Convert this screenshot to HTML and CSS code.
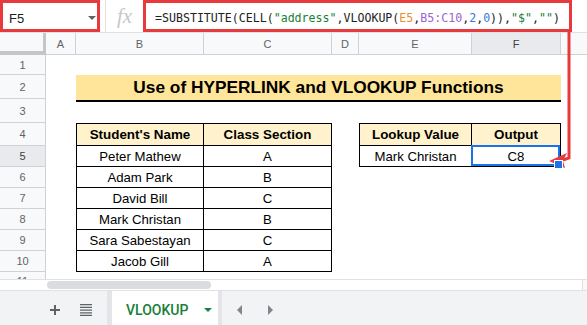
FILE: index.html
```html
<!DOCTYPE html>
<html lang="en">
<head>
    <meta charset="UTF-8">
    <meta name="viewport" content="width=device-width, initial-scale=1.0">
    <title>VLOOKUP - Google Sheets</title>
    <link rel="stylesheet" href="styles.css">
</head>
<body>
    <div class="topbar">
        <div class="namebox">
            <span class="cellref">F5</span>
            <span class="caret"></span>
        </div>
        <div class="divider"></div>
        <div class="fx">fx</div>
        <div class="formula">=SUBSTITUTE(CELL(<span class="tok-str">"address"</span>,VLOOKUP(<span class="tok-ref1">E5</span>,<span class="tok-ref2">B5:C10</span>,<span class="tok-num">2</span>,<span class="tok-num">0</span>)),<span class="tok-str">"$"</span>,<span class="tok-str">""</span>)</div>
    </div>

    <div class="colheads">
        <div class="corner"></div>
        <div class="ch col-a">A</div>
        <div class="ch col-b">B</div>
        <div class="ch col-c">C</div>
        <div class="ch col-d">D</div>
        <div class="ch col-e">E</div>
        <div class="ch col-f active">F</div>
        <div class="ch col-g"></div>
    </div>

    <div class="sheet">
        <div class="row h20"><div class="rh">1</div></div>

        <div class="row h24">
            <div class="rh">2</div>
            <div class="gap col-a"></div>
            <div class="title">Use of HYPERLINK and VLOOKUP Functions</div>
        </div>

        <div class="row h24"><div class="rh">3</div></div>

        <div class="row h23">
            <div class="rh">4</div>
            <div class="gap col-a"></div>
            <div class="cell head first col-b">Student's Name</div>
            <div class="cell head col-c">Class Section</div>
            <div class="gap col-d"></div>
            <div class="cell head first col-e">Lookup Value</div>
            <div class="cell head col-f">Output</div>
        </div>

        <div class="row h21">
            <div class="rh active">5</div>
            <div class="gap col-a"></div>
            <div class="cell first col-b">Peter Mathew</div>
            <div class="cell col-c">A</div>
            <div class="gap col-d"></div>
            <div class="cell first col-e">Mark Christan</div>
            <div class="cell col-f selected">C8</div>
        </div>

        <div class="row h21">
            <div class="rh">6</div>
            <div class="gap col-a"></div>
            <div class="cell first col-b">Adam Park</div>
            <div class="cell col-c">B</div>
        </div>

        <div class="row h21">
            <div class="rh">7</div>
            <div class="gap col-a"></div>
            <div class="cell first col-b">David Bill</div>
            <div class="cell col-c">C</div>
        </div>

        <div class="row h21">
            <div class="rh">8</div>
            <div class="gap col-a"></div>
            <div class="cell first col-b">Mark Christan</div>
            <div class="cell col-c">B</div>
        </div>

        <div class="row h21">
            <div class="rh">9</div>
            <div class="gap col-a"></div>
            <div class="cell first col-b">Sara Sabestayan</div>
            <div class="cell col-c">C</div>
        </div>

        <div class="row h21">
            <div class="rh">10</div>
            <div class="gap col-a"></div>
            <div class="cell first col-b">Jacob Gill</div>
            <div class="cell col-c">A</div>
        </div>

        <div class="row h21"><div class="rh partial">11</div></div>
    </div>

    <div class="hscroll">
        <div class="track"><div class="thumb"></div></div>
        <div class="vcorner"></div>
    </div>

    <div class="sheetbar">
        <svg class="icon-plus" width="10" height="10" viewBox="0 0 10 10">
            <path d="M5 0v10M0 5h10" stroke="#5f6368" stroke-width="2"/>
        </svg>
        <svg class="icon-list" width="12" height="12" viewBox="0 0 12 12">
            <path d="M0 0.7h12M0 3.4h12M0 6.1h12M0 8.8h12M0 11.4h12" stroke="#5f6368" stroke-width="1.3"/>
        </svg>
        <div class="tab">
            <span class="tab-name">VLOOKUP</span>
            <span class="tab-caret"></span>
        </div>
        <span class="nav nav-prev"></span>
        <span class="nav nav-next"></span>
    </div>

    <!-- annotation arrow from the formula box down to F5 -->
    <svg class="annot" width="587" height="325" viewBox="0 0 587 325">
        <path d="M569 30V158L563 160" fill="none" stroke="#e8393d" stroke-width="3"/>
        <polygon points="549,161 567,153 563,161 565,168" fill="#e8393d"/>
    </svg>
</body>
</html>
```

FILE: styles.css
```css
* {
    box-sizing: border-box;
}

body {
    position: relative;
    width: 587px;
    height: 325px;
    margin: 0;
    overflow: hidden;
    background-color: #ffffff;
    font-family: 'Liberation Sans', Arial, sans-serif;
    color: #000000;
}

/* formula bar */

.topbar {
    display: flex;
    height: 32px;
}

.namebox {
    display: flex;
    align-items: center;
    width: 100px;
    height: 32px;
    padding: 4px 1px 0 6px;
    border: 3px solid #e8393d;
}

.cellref {
    font-size: 13px;
    color: #202124;
}

.caret {
    margin-left: auto;
    border-left: 4px solid transparent;
    border-right: 4px solid transparent;
    border-top: 4px solid #5f6368;
}

.divider {
    width: 1px;
    margin-left: 5px;
    background-color: #e3e3e3;
}

.fx {
    display: flex;
    align-items: center;
    justify-content: center;
    width: 37px;
    padding-top: 1px;
    font-family: 'Liberation Serif', serif;
    font-style: italic;
    font-size: 21px;
    color: #c4c7cb;
}

.formula {
    display: flex;
    align-items: center;
    width: 429px;
    height: 32px;
    padding: 3px 0 0 9px;
    border: 3px solid #e8393d;
    font-family: 'DejaVu Sans Mono', monospace;
    font-size: 11.6px;
    color: #202124;
    white-space: pre;
}

.tok-str { color: #188038; }
.tok-ref1 { color: #e8912d; }
.tok-ref2 { color: #9a62d3; }
.tok-num { color: #3b78d8; }

/* column widths shared by headers and rows */

.col-a { width: 30px; }
.col-b { width: 128px; }
.col-c { width: 128px; }
.col-d { width: 27px; }
.col-e { width: 113px; }
.col-f { width: 89px; }
.col-g { flex: 1; }

/* column headers */

.colheads {
    display: flex;
    height: 23px;
    border-top: 1px solid #e1e1e1;
    background-color: #f8f9fa;
}

.corner {
    width: 46px;
    border-right: 3px solid #c4c6c9;
    border-bottom: 4px solid #c4c6c9;
}

.ch {
    display: flex;
    align-items: center;
    justify-content: center;
    border-right: 1px solid #cfd1d4;
    border-bottom: 1px solid #cfd1d4;
    font-size: 11px;
    color: #5f6368;
}

.ch.col-g {
    border-right: none;
}

.ch.active {
    background-color: #e8eaed;
    color: #3c4043;
}

/* grid body */

.sheet {
    height: 224px;
    overflow: hidden;
}

.row {
    display: flex;
}

.h20 { height: 20px; }
.h21 { height: 21px; }
.h23 { height: 23px; }
.h24 { height: 24px; }

.rh {
    display: flex;
    align-items: center;
    justify-content: center;
    flex-shrink: 0;
    width: 46px;
    border-right: 1px solid #cfd1d4;
    border-bottom: 1px solid #cfd1d4;
    background-color: #f8f9fa;
    font-size: 11px;
    color: #5f6368;
}

.rh.partial {
    align-items: flex-start;
    padding-top: 3px;
}

.rh.active {
    background-color: #e8eaed;
    color: #3c4043;
}

.gap {
    flex-shrink: 0;
}

.title {
    flex-shrink: 0;
    display: flex;
    align-items: center;
    justify-content: center;
    width: 485px;
    height: 27px;
    border-bottom: 2px solid #000000;
    background-color: #ffe599;
    font-size: 17.3px;
    font-weight: bold;
}

.cell {
    position: relative;
    flex-shrink: 0;
    display: flex;
    align-items: center;
    justify-content: center;
    border-right: 1px solid #000000;
    border-bottom: 1px solid #000000;
    font-size: 13.2px;
}

.cell.first {
    border-left: 1px solid #000000;
}

.cell.head {
    border-top: 1px solid #000000;
    background-color: #fff2cc;
    font-size: 13.4px;
    font-weight: bold;
}

.cell.selected::after {
    content: '';
    position: absolute;
    top: -1px;
    left: -1px;
    right: 0;
    bottom: 0;
    border: 2px solid #1a73e8;
}

.cell.selected::before {
    content: '';
    position: absolute;
    right: -3px;
    bottom: -3px;
    width: 7px;
    height: 7px;
    border: 1px solid #ffffff;
    background-color: #1a73e8;
    z-index: 1;
}

/* horizontal scrollbar */

.hscroll {
    display: flex;
    height: 12px;
    border-top: 1px solid #e1e1e1;
    border-bottom: 1px solid #e1e1e1;
}

.track {
    flex: 1;
    padding: 1px 0 0 47px;
}

.thumb {
    width: 164px;
    height: 8px;
    border-radius: 4px;
    background-color: #dadce0;
}

.vcorner {
    width: 5px;
    border-left: 1px solid #e1e1e1;
    background-color: #f8f9fa;
}

/* sheet tabs */

.sheetbar {
    display: flex;
    align-items: center;
    height: 34px;
    background-color: #f1f3f4;
}

.icon-plus {
    margin: 3px 0 0 50px;
}

.icon-list {
    margin: 3px 0 0 20px;
}

.tab {
    display: flex;
    align-items: center;
    align-self: stretch;
    margin-left: 15px;
    padding: 3px 6px 0 14px;
    border-left: 5px solid #e3e5e8;
    border-right: 4px solid #e3e5e8;
    background-color: #ffffff;
}

.tab-name {
    width: 68px;
    font-family: Roboto, 'Liberation Sans', sans-serif;
    font-size: 14px;
    font-weight: 500;
    color: #188038;
}

.tab-caret {
    margin-left: 10px;
    border-left: 4px solid transparent;
    border-right: 4px solid transparent;
    border-top: 4px solid #188038;
}

.nav {
    margin-top: 3px;
    border-top: 5px solid transparent;
    border-bottom: 5px solid transparent;
}

.nav-prev {
    margin-left: 15px;
    border-right: 5px solid #80868b;
}

.nav-next {
    margin-left: 26px;
    border-left: 5px solid #80868b;
}

.annot {
    position: absolute;
    top: 0;
    left: 0;
    pointer-events: none;
}
```
